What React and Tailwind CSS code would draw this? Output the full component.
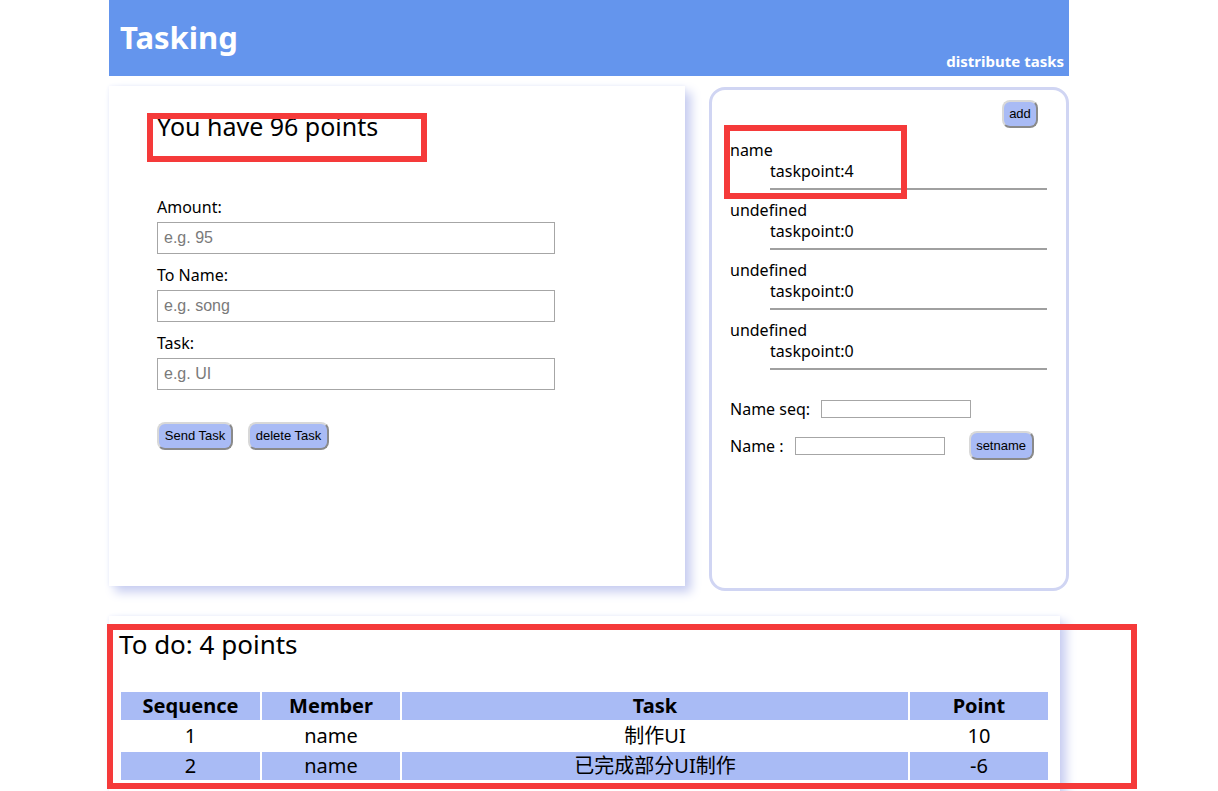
import React from 'react'

const font = { fontFamily: '"Noto Sans", "Noto Sans CJK SC", sans-serif' }

const members = [
  { name: 'name', point: 4 },
  { name: 'undefined', point: 0 },
  { name: 'undefined', point: 0 },
  { name: 'undefined', point: 0 },
]

const tasks = [
  { seq: 1, member: 'name', task: '制作UI', point: 10 },
  { seq: 2, member: 'name', task: '已完成部分UI制作', point: -6 },
]

function Btn({ children, className = '' }) {
  return (
    <button
      type="button"
      className={`h-[28px] rounded-[8px] border-2 border-t-[#d8d8d8] border-l-[#d8d8d8] border-r-[#8a8a8a] border-b-[#8a8a8a] bg-[#a9bbf5] px-[5px] text-[13px] text-black font-['Liberation_Sans',Arial,sans-serif] ${className}`}
    >
      {children}
    </button>
  )
}

function Field({ label, placeholder }) {
  return (
    <div className="flex flex-col">
      <label className="h-[22px] text-[16px] leading-[22px]">{label}</label>
      <input
        placeholder={placeholder}
        className="mt-[4px] h-[32px] w-[398px] border border-[#a6a6a6] px-[6px] text-[16px] font-['Liberation_Sans',Arial,sans-serif] placeholder:text-[#7a7a7a] outline-none"
      />
    </div>
  )
}

export default function App() {
  return (
    <div className="min-h-[791px] bg-white text-black" style={font}>
      <div className="ml-[109px] w-[960px]">
        {/* header */}
        <header className="relative h-[76px] bg-[#6495ed] text-white">
          <h1 className="absolute left-[11px] top-[16px] text-[31px] font-bold leading-[42px]">Tasking</h1>
          <span className="absolute right-[5px] top-[51px] text-[15px] font-bold leading-[20px]">distribute tasks</span>
        </header>

        <div className="mt-[10px] flex items-start">
          {/* left card */}
          <div className="relative h-[500px] w-[576px] bg-white pl-[48px] pt-[24px] shadow-[6px_6px_10px_#c6ccf0,0_0_4px_#eef0fb]">
            <div className="text-[25px] leading-[32px]">You have 96 points</div>
            <div className="absolute left-[38px] top-[27px] h-[49px] w-[280px] border-[6px] border-[#f53a3a]" />

            <div className="mt-[54px] flex flex-col gap-[10px]">
              <Field label="Amount:" placeholder="e.g. 95" />
              <Field label="To Name:" placeholder="e.g. song" />
              <Field label="Task:" placeholder="e.g. UI" />
            </div>

            <div className="mt-[32px] flex gap-[15px]">
              <Btn className="w-[76px]">Send Task</Btn>
              <Btn className="w-[81px]">delete Task</Btn>
            </div>
          </div>

          {/* right card */}
          <div className="relative ml-[24px] mt-[1px] h-[504px] w-[360px] rounded-[16px] border-[3px] border-[#d0d5f3] bg-white pl-[18px] pr-[19px] pt-[10px]">
            <div className="flex justify-end pr-[9px]">
              <Btn className="w-[36px] px-0">add</Btn>
            </div>
            <div className="mt-[12px]">
              {members.map((m, i) => (
                <div key={i} className="mb-[10px]">
                  <div className="text-[16px] leading-[21px]">{m.name}</div>
                  <div className="pl-[40px] text-[16px] leading-[21px]">taskpoint:{m.point}</div>
                  <div className="ml-[40px] mt-[6px] border-t-2 border-[#a0a0a0]" />
                </div>
              ))}
            </div>
            <div className="absolute left-[12px] top-[35px] h-[74px] w-[183px] border-[6px] border-[#f53a3a]" />

            <div className="mt-[27px] flex items-center text-[16px]">
              <span>Name seq:</span>
              <input className="ml-[11px] h-[18px] w-[150px] border border-[#a6a6a6] outline-none" />
            </div>
            <div className="mt-[10px] flex items-center text-[16px]">
              <span>Name :</span>
              <input className="ml-[11px] h-[18px] w-[150px] border border-[#a6a6a6] outline-none" />
              <Btn className="ml-[24px] h-[29px] w-[65px]">setname</Btn>
            </div>
          </div>
        </div>

        {/* bottom card */}
        <div className="relative mt-[25px] w-[951px] bg-white px-[10px] pb-[10px] pt-[12px] shadow-[6px_6px_10px_#c6ccf0,0_0_4px_#eef0fb]">
          <div className="text-[26px] leading-[32px]">To do: 4 points</div>
          <table className="mt-[30px] w-[931px] border-separate border-spacing-[2px] text-[20px]">
            <thead>
              <tr className="bg-[#a9bbf5]">
                <th className="h-[28px] w-[139px] p-0 font-bold leading-[28px]">Sequence</th>
                <th className="w-[138px] p-0 font-bold leading-[28px]">Member</th>
                <th className="w-[506px] p-0 font-bold leading-[28px]">Task</th>
                <th className="w-[138px] p-0 font-bold leading-[28px]">Point</th>
              </tr>
            </thead>
            <tbody>
              {tasks.map((t, i) => (
                <tr key={t.seq} className={i % 2 === 1 ? 'bg-[#a9bbf5]' : 'bg-white'}>
                  <td className="h-[28px] p-0 text-center leading-[28px]">{t.seq}</td>
                  <td className="p-0 text-center leading-[28px]">{t.member}</td>
                  <td className="p-0 text-center leading-[28px]">{t.task}</td>
                  <td className="p-0 text-center leading-[28px]">{t.point}</td>
                </tr>
              ))}
            </tbody>
          </table>
          <div className="absolute left-[-2px] top-[8px] h-[165px] w-[1030px] border-[6px] border-[#f53a3a]" />
        </div>
      </div>
    </div>
  )
}
